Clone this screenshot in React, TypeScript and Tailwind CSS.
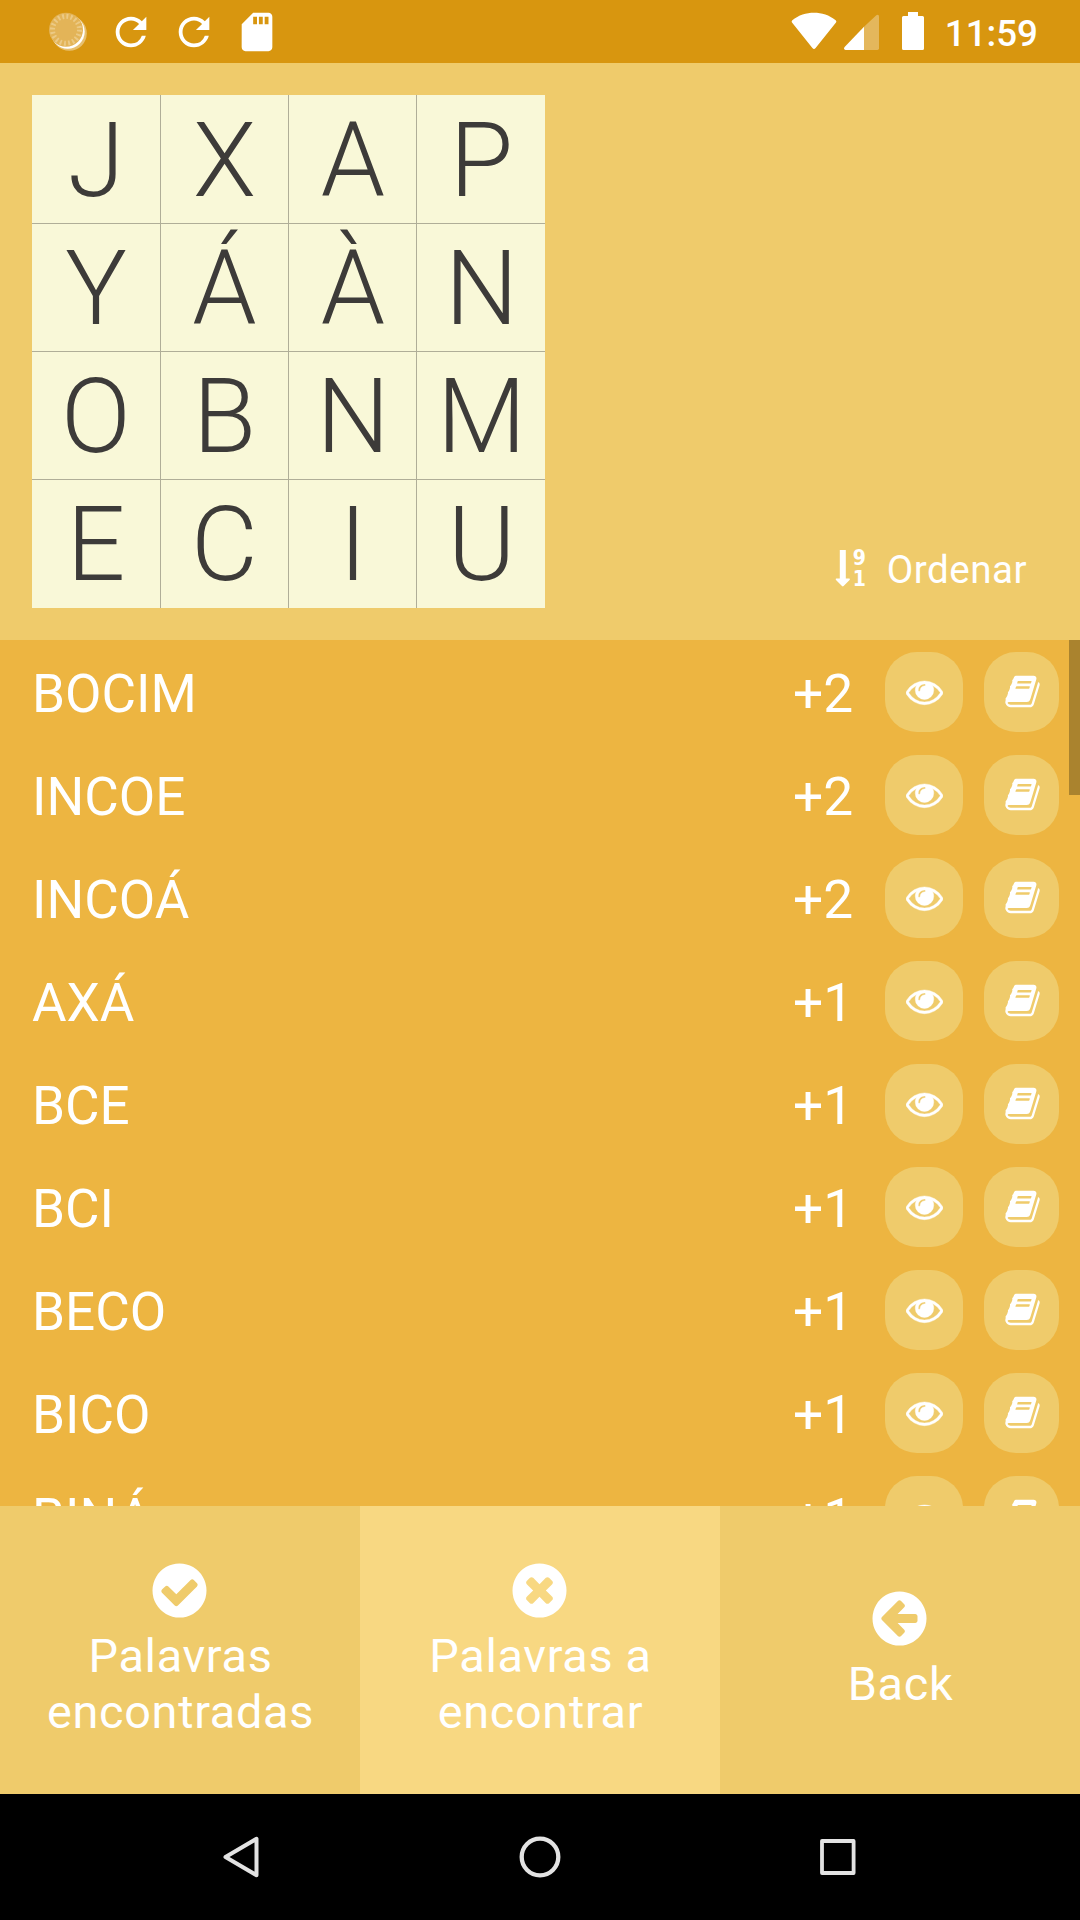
import React from "react";
import { MdRefresh, MdSdCard } from "react-icons/md";

const DISC =
  "m0 0q0 209-103 385.5t-279.5 279.5-385.5 103-385.5-103-279.5-279.5-103-385.5 103-385.5 279.5-279.5 385.5-103 385.5 103 279.5 279.5 103 385.5z";

const ICONS = {
  check:
    "M1412 734q0-28-18-46l-91-90q-19-19-45-19t-45 19l-408 407-226-226q-19-19-45-19t-45 19l-91 90q-18 18-18 46 0 27 18 45l362 362q19 19 45 19 27 0 46-19l543-543q18-18 18-45zM1664 896" +
    DISC,
  times:
    "M1277 1122q0-26-19-45l-181-181 181-181q19-19 19-45 0-27-19-46l-90-90q-19-18-46-18-26 0-45 18l-181 181-181-181q-19-18-45-18-27 0-46 18l-90 90q-19 19-19 46 0 26 19 45l181 181-181 181q-19 19-19 45 0 27 19 46l90 90q19 18 46 18 26 0 45-18l181-181 181 181q19 18 45 18 27 0 46-18l90-90q19-19 19-46zM1664 896" +
    DISC,
  back:
    "M1408 960v-128q0-26-19-45t-45-19h-502l189-189q19-19 19-45t-19-45l-91-91q-18-18-45-18t-45 18l-362 362-91 91q-18 18-18 45t18 45l91 91 362 362q18 18 45 18t45-18l91-91q18-18 18-45t-18-45l-189-189h502q26 0 45-19t19-45zM1664 896" +
    DISC,
  eye: "M1664 960q-152-236-381-353 61 104 61 225 0 185-131.5 316.5t-316.5 131.5-316.5-131.5-131.5-316.5q0-121 61-225-229 117-381 353 133 205 333.5 326.5t434.5 121.5 434.5-121.5 333.5-326.5zm-720-384q0-20-14-34t-34-14q-125 0-214.5 89.5t-89.5 214.5q0 20 14 34t34 14 34-14 14-34q0-86 61-147t147-61q20 0 34-14t14-34zm848 384q0 34-20 69-140 230-376.5 368.5t-499.5 138.5-499.5-139-376.5-368q-20-35-20-69t20-69q140-229 376.5-368t499.5-139 499.5 139 376.5 368q20 35 20 69z",
  book: "M1703 478q40 57 18 129l-275 906q-19 64-76.5 107.5t-122.5 43.5h-923q-77 0-148.5-53.5t-99.5-131.5q-24-67-2-127 0-4 3-27t4-37q1-8-3-21.5t-3-19.5q2-11 8-21t16.5-23.5 16.5-23.5q23-38 45-91.5t30-91.5q3-10 .5-30t-.5-28q3-11 17-28t17-23q21-36 42-92t25-90q1-9-2.5-32t.5-28q4-13 22-30.5t22-22.5q19-26 42.5-84.5t27.5-96.5q1-8-3-25.5t-2-26.5q2-8 9-18t18-23 17-21q8-12 16.5-30.5t15-35 16-36 19.5-32 26.5-23.5 36-11.5 47.5 5.5l-1 3q38-9 51-9h761q74 0 114 56t18 130l-274 906q-36 119-71.5 153.5t-128.5 34.5h-869q-27 0-38 15-11 16-1 43 24 70 144 70h923q29 0 56-15.5t35-41.5l300-987q7-22 5-57 38 15 59 43zm-1064 2q-4 13 2 22.5t20 9.5h608q13 0 25.5-9.5t16.5-22.5l21-64q4-13-2-22.5t-20-9.5h-608q-13 0-25.5 9.5t-16.5 22.5zm-83 256q-4 13 2 22.5t20 9.5h608q13 0 25.5-9.5t16.5-22.5l21-64q4-13-2-22.5t-20-9.5h-608q-13 0-25.5 9.5t-16.5 22.5z",
};

function Icon({ name, className }: { name: keyof typeof ICONS; className: string }) {
  return (
    <svg viewBox="0 0 1792 1792" fill="currentColor" className={className}>
      <path d={ICONS[name]} />
    </svg>
  );
}

const LETTERS = ["J", "X", "A", "P", "Y", "Á", "À", "N", "O", "B", "N", "M", "E", "C", "I", "U"];

const WORDS = [
  { word: "BOCIM", points: 2 },
  { word: "INCOE", points: 2 },
  { word: "INCOÁ", points: 2 },
  { word: "AXÁ", points: 1 },
  { word: "BCE", points: 1 },
  { word: "BCI", points: 1 },
  { word: "BECO", points: 1 },
  { word: "BICO", points: 1 },
  { word: "BINÁ", points: 1 },
];

function StatusBar() {
  return (
    <div className="flex h-[63px] shrink-0 items-start justify-between bg-[#d8960f] pl-[45px] pr-[42px]">
      <div className="flex gap-[17px] pt-[8.5px]">
        <svg viewBox="0 0 46 46" className="size-[46px]">
          <circle cx="24.3" cy="24.3" r="17.5" fill="#fff" fillOpacity="0.4" />
          <circle cx="22.7" cy="22.7" r="17" fill="#fff" />
          <circle cx="21" cy="20.8" r="17" fill="#e3b458" />
          <circle cx="21" cy="20.8" r="13.5" fill="none" stroke="#ecca85" strokeWidth="5" strokeDasharray="1.9 2.34" />
        </svg>
        <MdRefresh className="size-[46px]" />
        <MdRefresh className="size-[46px]" />
        <MdSdCard className="size-[46px]" />
      </div>
      <div className="flex">
        <svg viewBox="0 0 46 38" className="mt-[12px] h-[38px] w-[46px]" fill="currentColor">
          <path d="M1.3 8.2 Q0.2 9.3 1 10.6 L21.4 36 Q23 38 24.6 36 L45 10.6 Q45.8 9.3 44.7 8.2 C32 -1.6 14 -1.6 1.3 8.2z" />
        </svg>
        <svg viewBox="0 0 36 36" className="ml-[7px] mt-[14px] size-[36px]">
          <path d="M20 12.7 L32.3 1.2 Q35 0 35 2.5 V34.3 Q35 36 33.3 36 H20z" fill="#fff" fillOpacity="0.32" />
          <path d="M20 12.7 V36 H1.5 Q-0.8 35.5 0.6 33z" fill="#fff" />
        </svg>
        <svg viewBox="0 0 22 38" className="ml-[22px] mt-[12px] h-[38px] w-[22px]" fill="currentColor">
          <path d="M6 0h10v4h4.5q1.5 0 1.5 1.5v31q0 1.5-1.5 1.5h-19q-1.5 0-1.5-1.5v-31q0-1.5 1.5-1.5H6z" />
        </svg>
        <span className="ml-[21px] text-[36.75px] font-medium leading-[67px]">11:59</span>
      </div>
    </div>
  );
}

function Board() {
  return (
    <div className="grid size-[513px] grid-cols-[128px_127px_127px_128px] grid-rows-[128px_127px_127px_128px] gap-px bg-[#b0ae98]">
      {LETTERS.map((letter, i) => (
        <div
          key={i}
          className={`bg-[#f9f8d8] text-center text-[103px] font-light text-[#3d3b39] ${
            i < 4 ? "leading-[132px]" : "leading-[130px]"
          } ${i % 4 > 1 ? "pl-px" : ""}`}
        >
          {letter}
        </div>
      ))}
    </div>
  );
}

function SortButton() {
  return (
    <div className="flex items-start">
      <svg viewBox="0 0 15 37" className="h-[37px] w-[15px]" fill="currentColor">
        <path d="M4.8 0h6v28.5h3.5q1 .4.3 1.4l-6 6.2q-.8.8-1.6 0l-6-6.2q-.7-1 .3-1.4h3.5z" />
      </svg>
      <span className="ml-[3px] flex w-[13px] flex-col font-['DejaVu_Sans_Condensed','DejaVu_Sans',sans-serif] text-[21px] font-bold leading-[21px]">
        <span className="-mt-[2px]">9</span>
        <span>1</span>
      </span>
      <span className="ml-[21px] text-[38.6px] leading-[39px] tracking-[0.5px]">Ordenar</span>
    </div>
  );
}

function WordRow({ word, points }: { word: string; points: number }) {
  return (
    <div className="flex h-[103px] shrink-0 items-start pl-[32px] pr-[21px] pt-[12px]">
      <span className="flex-1 text-[53px] leading-[84px]">{word}</span>
      <span className="w-[92px] text-[53.3px] leading-[84px]">+{points}</span>
      <button className="flex h-[80px] w-[78px] items-center justify-center rounded-[32px] bg-[#efcb6b] pb-px">
        <Icon name="eye" className="size-[37px] stroke-white stroke-[20px]" />
      </button>
      <button className="ml-[21px] flex h-[80px] w-[75px] items-center justify-center rounded-[32px] bg-[#efcb6b] pb-px pl-px">
        <Icon name="book" className="size-[37px]" />
      </button>
    </div>
  );
}

function Tab({ icon, label, active = false }: { icon: keyof typeof ICONS; label: string[]; active?: boolean }) {
  return (
    <button
      className={`flex flex-1 flex-col items-center justify-center pb-[2px] ${active ? "bg-[#f8d882]" : "bg-[#efcb6b]"}`}
    >
      <Icon name={icon} className="mr-px size-[63px]" />
      <span className="mt-[6px] pl-px text-[46.8px] leading-[56px] tracking-[0.7px]">
        {label.map((line) => (
          <span key={line} className="block">
            {line}
          </span>
        ))}
      </span>
    </button>
  );
}

function NavigationBar() {
  return (
    <div className="flex h-[126px] shrink-0 items-center justify-between bg-black px-[217px]">
      <svg viewBox="0 0 48 48" className="size-[48px]" fill="none" stroke="#e3e3e3" strokeWidth="4" strokeLinejoin="round">
        <path d="M39.5 5.8 V42.2 L8.5 24z" />
      </svg>
      <svg viewBox="0 0 48 48" className="size-[48px]" fill="none" stroke="#e3e3e3" strokeWidth="4.3">
        <circle cx="24" cy="24" r="18.3" />
      </svg>
      <svg viewBox="0 0 48 48" className="size-[48px]" fill="none" stroke="#e3e3e3" strokeWidth="3.8" strokeLinejoin="round">
        <path d="M7 8h31.6v32H7z" />
      </svg>
    </div>
  );
}

export default function App() {
  return (
    <div className="flex h-[1920px] w-[1080px] flex-col overflow-hidden font-['Roboto',sans-serif] text-white">
      <StatusBar />
      <div className="flex h-[577px] shrink-0 items-start justify-between bg-[#efcb6b] pl-[32px] pr-[53px] pt-[32px]">
        <Board />
        <div className="pt-[455px]">
          <SortButton />
        </div>
      </div>
      <div className="relative flex h-[866px] shrink-0 flex-col overflow-hidden bg-[#edb541]">
        {WORDS.map((entry) => (
          <WordRow key={entry.word} {...entry} />
        ))}
        <div className="absolute right-0 top-0 h-[155px] w-[11px] bg-[#aa832e]" />
      </div>
      <div className="flex h-[288px] shrink-0">
        <Tab icon="check" label={["Palavras", "encontradas"]} />
        <Tab icon="times" label={["Palavras a", "encontrar"]} active />
        <Tab icon="back" label={["Back"]} />
      </div>
      <NavigationBar />
    </div>
  );
}
